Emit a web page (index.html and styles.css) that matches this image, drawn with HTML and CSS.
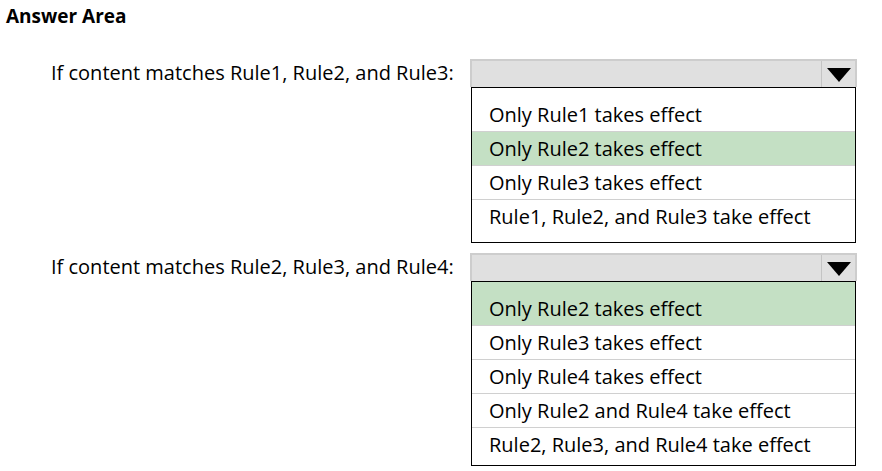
FILE: index.html
```html
<!DOCTYPE html>
<html>
<head>
<meta charset="utf-8">
<link rel="stylesheet" href="styles.css">
</head>
<body>
<div class="page">
  <h1 class="title">Answer Area</h1>
  <div class="question">
    <div class="label">If content matches Rule1, Rule2, and Rule3:</div>
    <div class="dropdown">
      <div class="dd-head"><span class="dd-btn"><svg width="24" height="14" viewBox="0 0 24 14"><polygon points="0,0 24,0 12,14" fill="#000"/></svg></span></div>
      <ul class="dd-list">
        <li>Only Rule1 takes effect</li>
        <li class="sel">Only Rule2 takes effect</li>
        <li>Only Rule3 takes effect</li>
        <li>Rule1, Rule2, and Rule3 take effect</li>
      </ul>
    </div>
  </div>
  <div class="question">
    <div class="label">If content matches Rule2, Rule3, and Rule4:</div>
    <div class="dropdown">
      <div class="dd-head"><span class="dd-btn"><svg width="24" height="14" viewBox="0 0 24 14"><polygon points="0,0 24,0 12,14" fill="#000"/></svg></span></div>
      <ul class="dd-list dd-list-tight">
        <li class="sel">Only Rule2 takes effect</li>
        <li>Only Rule3 takes effect</li>
        <li>Only Rule4 takes effect</li>
        <li>Only Rule2 and Rule4 take effect</li>
        <li>Rule2, Rule3, and Rule4 take effect</li>
      </ul>
    </div>
  </div>
</div>
</body>
</html>
```
FILE: styles.css
```css
html, body {
  margin: 0;
  padding: 0;
  background: #fff;
}
.page {
  font-family: "Open Sans", "Noto Sans", sans-serif;
  color: #000;
  padding: 0;
}
.title {
  margin: 0;
  padding: 4px 0 0 6px;
  height: 59px;
  box-sizing: border-box;
  font-size: 19px;
  font-weight: 700;
  line-height: 24px;
}
.question {
  display: flex;
  align-items: flex-start;
  margin-bottom: 10px;
}
.label {
  width: 470px;
  box-sizing: border-box;
  padding-left: 51px;
  font-size: 20px;
  line-height: 28px;
}
.dropdown {
  width: 387px;
}
.dd-head {
  height: 28px;
  box-sizing: border-box;
  background: #e0e0e0;
  border: 2px solid #cdcdcd;
  border-bottom: none;
  display: flex;
  justify-content: flex-end;
}
.dd-btn {
  width: 33px;
  border-left: 1px solid #c4c4c4;
  display: flex;
  align-items: center;
  justify-content: center;
  padding-top: 1px;
}
.dd-list {
  list-style: none;
  margin: 0 1px;
  padding: 0 0 9px;
  border: 1px solid #000;
}
.dd-list-tight {
  padding-bottom: 4px;
}
.dd-list li {
  height: 33px;
  line-height: 33px;
  padding-left: 17px;
  font-size: 20px;
  border-bottom: 1px solid #d0d0d0;
}
.dd-list li:first-child {
  padding-top: 10px;
}
.dd-list li:last-child {
  border-bottom: none;
}
.dd-list li.sel {
  background: #c4e0c4;
}
```
